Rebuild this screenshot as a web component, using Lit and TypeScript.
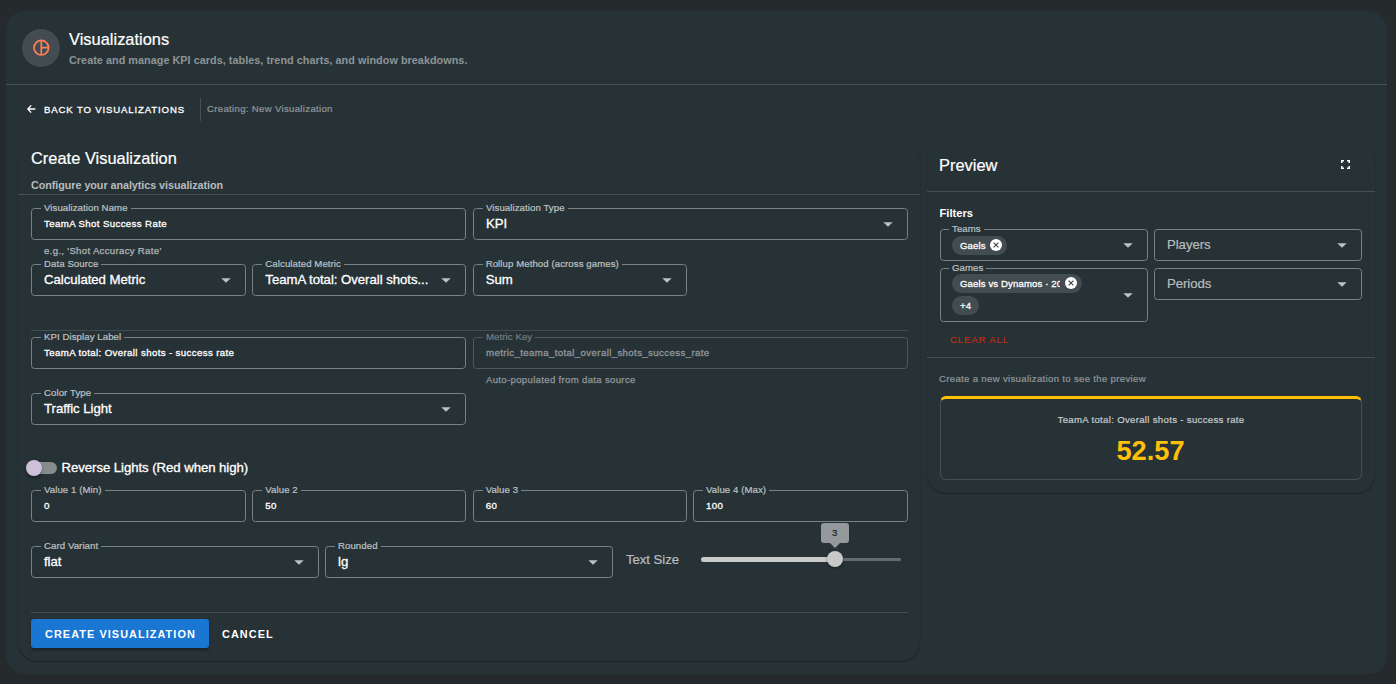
import { LitElement, html, css, svg, nothing } from "lit";
import { customElement, property } from "lit/decorators.js";
import { classMap } from "lit/directives/class-map.js";

const caret = html`<svg class="caret" viewBox="0 0 10 5" width="10" height="5"><path d="M.3 .2H9.7L5 4.8Z" fill="currentColor" /></svg>`;

@customElement("viz-field")
class VizField extends LitElement {
  @property() label = "";
  @property() value = "";
  @property() placeholder = "";
  @property() hint = "";
  @property({ type: Boolean }) select = false;
  @property({ type: Boolean }) disabled = false;

  static styles = css`
    :host { display: block; min-width: 0; }
    .box {
      position: relative; box-sizing: border-box; min-height: 32px; height: var(--field-height, 32px);
      border: 1px solid #7b8285; border-radius: 3.5px; padding: 0 14px 0 12px;
      display: flex; align-items: center; color: #fff;
    }
    .label {
      position: absolute; left: var(--label-left, 9px); top: -7px; padding: 0 3px; background: #273237;
      font-size: 9.6px; line-height: 11px; letter-spacing: 0.09px; color: #bec2c3; white-space: nowrap;
      -webkit-text-stroke: 0.2px currentColor;
    }
    .text { font-size: 9.7px; letter-spacing: 0.36px; line-height: 14px; -webkit-text-stroke: 0.3px currentColor; }
    .select .text {
      font-size: 13.2px; letter-spacing: -0.04px; line-height: 18px; padding-bottom: 1px;
      white-space: nowrap; -webkit-text-stroke: 0.3px currentColor;
    }
    .content { flex: 1; min-width: 0; display: flex; }
    .placeholder { font-size: 13.2px; letter-spacing: -0.06px; line-height: 18px; color: #b9bdbf; padding-bottom: 1px; -webkit-text-stroke: 0.2px currentColor; }
    .caret { color: #bec2c3; flex: none; margin-top: var(--caret-drop, 0); }
    .hint { font-size: 9.6px; letter-spacing: 0.32px; line-height: 12px; padding: 5px 0 0 13px; color: #b2b6b8; -webkit-text-stroke: 0.25px currentColor; }
    .disabled .box { border-color: #4f585c; }
    .disabled .label { color: #767d80; }
    .disabled .text, .disabled .hint { color: #91979a; }
  `;

  render() {
    return html`<div class=${classMap({ select: this.select, disabled: this.disabled })}>
      <div class="box">
        ${this.label ? html`<span class="label">${this.label}</span>` : nothing}
        <div class="content">
          ${this.value ? html`<span class="text">${this.value}</span>` : nothing}
          ${this.placeholder ? html`<span class="placeholder">${this.placeholder}</span>` : nothing}
          <slot></slot>
        </div>
        ${this.select ? caret : nothing}
      </div>
      ${this.hint ? html`<div class="hint">${this.hint}</div>` : nothing}
    </div>`;
  }
}

@customElement("app-root")
class AppRoot extends LitElement {
  static styles = css`
    :host {
      display: block; box-sizing: border-box; height: 684px; overflow: hidden; padding: 11px 9px 10px 6px;
      background: #252b2d; color: #fff; font-family: "Liberation Sans", Arial, sans-serif;
    }
    * { box-sizing: border-box; }
    .shell { height: 663px; background: #273237; border-radius: 19px; }
    .header { height: 74px; border-bottom: 1px solid #465054; display: flex; align-items: center; padding-left: 16px; gap: 9px; }
    .avatar { width: 38px; height: 38px; border-radius: 50%; background: #434c51; display: grid; place-items: center; }
    .title { font-size: 16.4px; letter-spacing: 0.02px; line-height: 25px; -webkit-text-stroke: 0.2px currentColor; }
    .sub { font-size: 10.8px; font-weight: 700; letter-spacing: 0.05px; line-height: 16px; color: #8e9496; }
    .header .title { line-height: 22px; margin-top: 1px; }
    .header .sub { margin-top: 2px; }
    .crumbs { height: 57px; padding: 13px 0 0 20px; display: flex; align-items: flex-start; font-size: 9.6px; }
    .back { display: flex; align-items: center; gap: 7px; width: 175px; height: 23px; letter-spacing: 0.857px; -webkit-text-stroke: 0.3px currentColor; border-right: 1px solid #465054; }
    .back svg { margin-top: -2px; }
    .current { padding-left: 6px; line-height: 22px; letter-spacing: 0.32px; color: #91979a; -webkit-text-stroke: 0.2px currentColor; }
    .columns { display: flex; align-items: flex-start; gap: 7px; padding-left: 12px; }
    .panel { border-radius: 19px; box-shadow: 0 1px 1px rgba(0, 0, 0, 0.3), 0 0 2px rgba(0, 0, 0, 0.1); }
    .form { width: 902px; height: 519px; }
    .form-head { height: 53px; border-bottom: 1px solid #465054; padding: 4px 13px 0; }
    .form-head .sub { color: #b8bcbe; margin-top: 6px; letter-spacing: -0.06px; }
    .form-body { padding: 13px 12px 0 13px; }
    .row { display: grid; justify-content: space-between; height: 56px; align-items: start; }
    .two { grid-template-columns: repeat(2, 435px); }
    .three { grid-template-columns: 288px 288px 289px; }
    .four { grid-template-columns: 215px 214px 214px 215px; }
    .rule { height: 1px; background: #434d51; }
    .first-rule { margin: 10px 0 6px; }
    .last-rule { margin: 10px 0 6px; }
    .color-row { height: 67px; }
    .switch { display: flex; align-items: center; height: 16px; margin: 0 0 14px -5px; gap: 4.5px; }
    .switch-track { width: 31px; height: 12px; border-radius: 6px; background: linear-gradient(#868b8c, #868b8c) right / 26px 12px no-repeat; display: flex; align-items: center; }
    .switch-thumb { width: 16px; height: 16px; flex: none; border-radius: 50%; background: #cdc0d9; box-shadow: 0 2px 3px rgba(0, 0, 0, 0.35); }
    .switch-text { font-size: 13.2px; letter-spacing: -0.06px; padding-bottom: 1px; -webkit-text-stroke: 0.3px currentColor; }
    .slider { display: flex; align-items: center; height: 27px; padding: 0 7px; }
    .slider-label { font-size: 13.2px; letter-spacing: -0.06px; width: 75px; color: #b9bdbf; -webkit-text-stroke: 0.2px currentColor; }
    .track { position: relative; flex: 1; height: 3px; border-radius: 2px; background: #646c70; }
    .fill { position: absolute; left: 0; top: -1px; height: 5px; border-radius: 3px; background: #c9caca; }
    .knob { position: absolute; top: -7px; width: 16px; height: 16px; margin-left: -8px; border-radius: 50%; background: #c8c9c9; box-shadow: 0 1px 3px rgba(0, 0, 0, 0.4); }
    .tip { position: absolute; top: -35px; width: 28px; height: 20px; margin-left: -14px; border-radius: 3px; background: #94999b; color: #1c2124; font-size: 9.6px; line-height: 20px; text-align: center; -webkit-text-stroke: 0.2px currentColor; }
    .tip::after { content: ""; position: absolute; left: 9px; top: 20px; border: 5px solid transparent; border-top-color: #94999b; border-bottom: 0; }
    .actions { display: flex; align-items: center; }
    .btn { font-size: 10.9px; font-weight: 700; letter-spacing: 1.06px; line-height: 30px; height: 29px; }
    .primary { width: 178px; padding-left: 14px; background: #1976d2; border-radius: 3px; box-shadow: 0 2px 3px rgba(0, 0, 0, 0.35); margin-right: 13px; white-space: nowrap; }
    .preview { width: 448px; height: 351px; }
    .preview-head { height: 50px; border-bottom: 1px solid #465054; display: flex; align-items: center; justify-content: space-between; padding: 0 25px 3px 12px; }
    .preview-head svg { margin-top: -1px; }
    .filters { --caret-drop: 1px; --label-left: 8px; height: 166px; border-bottom: 1px solid #465054; padding: 14px 13px 0; }
    .filters-title { font-size: 11.2px; font-weight: 700; line-height: 14px; height: 23px; margin-left: -0.5px; }
    .filter-grid { display: grid; grid-template-columns: 1fr 1fr; gap: 7px 6px; align-items: start; }
    .games { --field-height: 54px; --caret-drop: 0; }
    .chips { display: flex; flex-wrap: wrap; gap: 3px 4px; margin-left: -1px; max-width: 148px; }
    .games .chips { padding-bottom: 2px; }
    .chip { height: 19px; border-radius: 10px; background: #434c51; padding: 0 8px; display: flex; align-items: center; font-size: 9.6px; letter-spacing: 0.12px; -webkit-text-stroke: 0.3px currentColor; }
    .chip-text { overflow: hidden; white-space: nowrap; max-width: 100px; }
    .chip.closable { padding-right: 5px; gap: 4.5px; }
    .chip svg { flex: none; }
    .clear { font-size: 9.6px; letter-spacing: 0.857px; color: #cd2a09; padding: 11px 0 0 10px; line-height: 13px; -webkit-text-stroke: 0.1px currentColor; }
    .result { padding: 14px 13px 0 12px; }
    .note { font-size: 9.6px; letter-spacing: 0.32px; line-height: 14px; color: #91979a; -webkit-text-stroke: 0.2px currentColor; }
    .kpi { margin: 10px 0 0 1px; height: 84px; border: 1px solid #465054; border-top: 3px solid #ffc107; border-radius: 6px; text-align: center; padding-top: 14px; }
    .kpi-label { font-size: 9.6px; letter-spacing: 0.32px; line-height: 14px; color: #c9cbcc; -webkit-text-stroke: 0.2px currentColor; }
    .kpi-value { font-size: 27.2px; font-weight: 700; line-height: 32px; color: #ffc107; margin: 8px 1px 0 0; }
  `;

  private close = svg`<svg viewBox="0 0 12 12" width="12" height="12"><circle cx="6" cy="6" r="6" fill="#fff"/><path d="M3.6 3.6L8.4 8.4M8.4 3.6L3.6 8.4" stroke="#3a4348" stroke-width="1.1"/></svg>`;

  private size = 66.8;

  private renderForm() {
    return html`<section class="panel form">
      <div class="form-head">
        <div class="title">Create Visualization</div>
        <div class="sub">Configure your analytics visualization</div>
      </div>
      <div class="form-body">
        <div class="row two">
          <viz-field label="Visualization Name" value="TeamA Shot Success Rate" hint="e.g., 'Shot Accuracy Rate'"></viz-field>
          <viz-field select label="Visualization Type" value="KPI"></viz-field>
        </div>
        <div class="row four">
          <viz-field select label="Data Source" value="Calculated Metric"></viz-field>
          <viz-field select label="Calculated Metric" value="TeamA total: Overall shots..."></viz-field>
          <viz-field select label="Rollup Method (across games)" value="Sum"></viz-field>
        </div>
        <div class="rule first-rule"></div>
        <div class="row two">
          <viz-field label="KPI Display Label" value="TeamA total: Overall shots - success rate"></viz-field>
          <viz-field disabled label="Metric Key" value="metric_teama_total_overall_shots_success_rate" hint="Auto-populated from data source"></viz-field>
        </div>
        <div class="row two color-row">
          <viz-field select label="Color Type" value="Traffic Light"></viz-field>
        </div>
        <div class="switch">
          <div class="switch-track"><div class="switch-thumb"></div></div>
          <span class="switch-text">Reverse Lights (Red when high)</span>
        </div>
        <div class="row four">
          <viz-field label="Value 1 (Min)" value="0"></viz-field>
          <viz-field label="Value 2" value="50"></viz-field>
          <viz-field label="Value 3" value="60"></viz-field>
          <viz-field label="Value 4 (Max)" value="100"></viz-field>
        </div>
        <div class="row three">
          <viz-field select label="Card Variant" value="flat"></viz-field>
          <viz-field select label="Rounded" value="lg"></viz-field>
          <div class="slider">
            <span class="slider-label">Text Size</span>
            <div class="track">
              <div class="fill" style="width:${this.size}%"></div>
              <div class="knob" style="left:${this.size}%"></div>
              <div class="tip" style="left:${this.size}%">3</div>
            </div>
          </div>
        </div>
        <div class="rule last-rule"></div>
        <div class="actions">
          <div class="btn primary">CREATE VISUALIZATION</div>
          <div class="btn">CANCEL</div>
        </div>
      </div>
    </section>`;
  }

  private renderPreview() {
    return html`<section class="panel preview">
      <div class="preview-head">
        <div class="title">Preview</div>
        <svg viewBox="0 0 9 9" width="9" height="9"><path d="M.75 3V.75H3M6 .75H8.25V3M8.25 6V8.25H6M3 8.25H.75V6" fill="none" stroke="#fff" stroke-width="1.5" /></svg>
      </div>
      <div class="filters">
        <div class="filters-title">Filters</div>
        <div class="filter-grid">
          <viz-field select label="Teams"><div class="chips">
            <div class="chip closable"><span class="chip-text">Gaels</span>${this.close}</div>
          </div></viz-field>
          <viz-field select placeholder="Players"></viz-field>
          <viz-field class="games" select label="Games"><div class="chips">
            <div class="chip closable"><span class="chip-text">Gaels vs Dynamos · 2024</span>${this.close}</div>
            <div class="chip">+4</div>
          </div></viz-field>
          <viz-field select placeholder="Periods"></viz-field>
        </div>
        <div class="clear">CLEAR ALL</div>
      </div>
      <div class="result">
        <div class="note">Create a new visualization to see the preview</div>
        <div class="kpi">
          <div class="kpi-label">TeamA total: Overall shots - success rate</div>
          <div class="kpi-value">52.57</div>
        </div>
      </div>
    </section>`;
  }

  render() {
    return html`<main class="shell">
      <header class="header">
        <div class="avatar">
          <svg viewBox="0 0 17 17" width="17" height="17"><g fill="none" stroke="#ff7f57" stroke-width="1.7"><circle cx="8.3" cy="8.7" r="7.3" /><path d="M8.3 1.4V16M8.3 8.7H15.6" /></g></svg>
        </div>
        <div>
          <div class="title">Visualizations</div>
          <div class="sub">Create and manage KPI cards, tables, trend charts, and window breakdowns.</div>
        </div>
      </header>
      <nav class="crumbs">
        <div class="back">
          <svg viewBox="0 0 11 10" width="11" height="10"><path d="M5.2 1.4L1.8 5L5.2 8.6M2 5H9.4" fill="none" stroke="#fff" stroke-width="1.3" /></svg>
          BACK TO VISUALIZATIONS
        </div>
        <div class="current">Creating: New Visualization</div>
      </nav>
      <div class="columns">${this.renderForm()}${this.renderPreview()}</div>
    </main>`;
  }
}
